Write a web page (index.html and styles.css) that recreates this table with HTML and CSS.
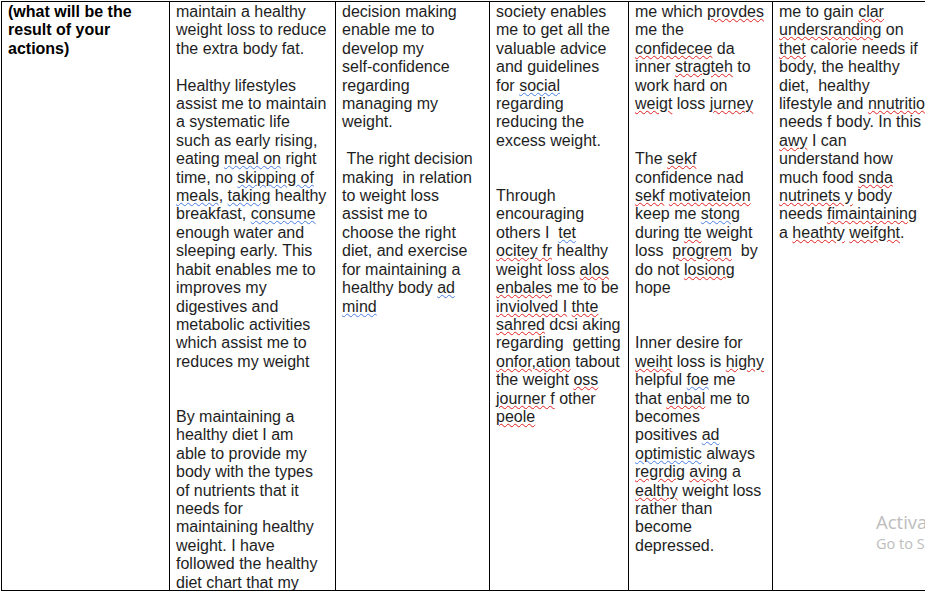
FILE: index.html
```html
<!DOCTYPE html>
<html lang="en">
<head>
<meta charset="utf-8">
<title>Reflection table</title>
<link rel="stylesheet" href="styles.css">
</head>
<body>
<div class="sheet">
  <div class="cell c1">
    <p class="head">(what will be the result of your actions)</p>
  </div>
  <div class="cell c2">
    <p>maintain a healthy weight loss to reduce the extra body fat.</p>
    <p><br></p>
    <p>Healthy lifestyles assist me to maintain a systematic life such as early rising, eating <span class="g">meal on</span> right time, no <span class="g">skipping of</span> <span class="g">meals</span>, <span class="g">taking</span> healthy breakfast, <span class="g">consume</span> enough water and sleeping early. This habit enables me to improves my digestives and metabolic activities which assist me to reduces my weight</p>
    <p><br></p>
    <p><br></p>
    <p>By maintaining a healthy diet I am able to provide my body with the types of nutrients that it needs for maintaining healthy weight. I have followed the healthy diet chart that my</p>
  </div>
  <div class="cell c3">
    <p>decision making enable me to develop my <span class="nw">self-confidence</span> regarding managing my weight.</p>
    <p><br></p>
    <p>&nbsp;The right decision making&nbsp; in relation to weight loss assist me to choose the right diet, and exercise for maintaining a healthy body <span class="g">ad mind</span></p>
  </div>
  <div class="cell c4">
    <p>society enables me to get all the valuable advice and guidelines for <span class="g">social</span> regarding reducing the excess weight.</p>
    <p><br></p>
    <p><br></p>
    <p>Through encouraging others I&nbsp; <span class="g">tet</span> <span class="s">ocitey fr</span> healthy weight loss <span class="s">alos</span> <span class="s">enbales</span> me to be <span class="s">inviolved I</span> <span class="s">thte</span> <span class="s">sahred</span> dcsi aking regarding&nbsp; getting <span class="s">onfor,ation</span> tabout the weight <span class="s">oss</span> <span class="s">journer f</span> other <span class="s">peole</span></p>
  </div>
  <div class="cell c5">
    <p>me which <span class="s">provdes</span> me the <span class="s">confidecee</span> da inner <span class="s">stragteh</span> to work hard on <span class="s">weigt</span> loss <span class="s">jurney</span></p>
    <p><br></p>
    <p><br></p>
    <p>The <span class="s">sekf</span> confidence nad <span class="s">sekf</span> <span class="s">motivateion</span> keep me <span class="g">stong</span> during <span class="s">tte</span> weight loss&nbsp; <span class="s">progrem</span>&nbsp; by do not <span class="s">losiong</span> hope</p>
    <p><br></p>
    <p><br></p>
    <p>Inner desire for <span class="s">weiht</span> loss is <span class="s">highy</span> helpful <span class="g">foe</span> me that <span class="s">enbal</span> me to becomes positives <span class="g">ad</span> <span class="g">optimistic</span> always <span class="s">regrdig</span> <span class="s">aving</span> a <span class="s">ealthy</span> weight loss rather than become depressed.</p>
  </div>
  <div class="cell c6">
    <p>me to gain <span class="s">clar</span> <span class="s">undersranding</span> on <span class="s">thet</span> calorie needs if body, the healthy diet,&nbsp; healthy lifestyle and <span class="s">nnutritio</span> needs f body. In this <span class="s">awy</span> I can understand how much food <span class="s">snda</span> <span class="s">nutrinets y</span> body needs <span class="s">fimaintaining</span> a <span class="s">heathty</span> <span class="s">weifght</span>.</p>
  </div>
</div>
<div class="watermark">
  <div class="wm-title">Activate Windows</div>
  <div class="wm-sub">Go to Settings to activate Windows.</div>
</div>
</body>
</html>
```

FILE: styles.css
```css
html, body {
  margin: 0;
  padding: 0;
  overflow: hidden;
  background: #fff;
}

body {
  width: 925px;
  height: 592px;
  position: relative;
  font-family: "Liberation Sans", Arial, sans-serif;
  font-size: 16px;
  line-height: 18.4px;
  color: #1e1e1e;
}

.sheet {
  display: grid;
  grid-template-columns: 168px 166px 154px 139px 144px 161px;
  width: max-content;
  height: 590px;
  box-sizing: border-box;
  margin: 1px 0 0 1px;
  border-top: 1px solid #000;
  border-bottom: 1px solid #000;
}

.cell {
  border-left: 1px solid #000;
  padding: 1px 7px 0 6px;
  overflow: hidden;
  min-width: 0;
}

.c2 {
  padding-right: 8px;
}

.c6 {
  border-right: 1px solid #000;
}

.cell p {
  margin: 0;
}

.head {
  font-weight: bold;
  color: #000;
}

.nw {
  white-space: nowrap;
}

.s,
.g {
  text-decoration-line: underline;
  text-decoration-style: wavy;
  text-decoration-thickness: 1px;
  text-underline-offset: 1px;
}

.s {
  text-decoration-color: #e02020;
}

.g {
  text-decoration-color: #4a7de0;
}

.watermark {
  position: absolute;
  left: 876px;
  top: 510px;
  white-space: nowrap;
  font-family: "Open Sans", "Noto Sans", sans-serif;
  color: #bdbdbd;
}

.wm-title {
  font-size: 18.5px;
  line-height: 24px;
}

.wm-sub {
  font-size: 14.5px;
  line-height: 20px;
}
```
